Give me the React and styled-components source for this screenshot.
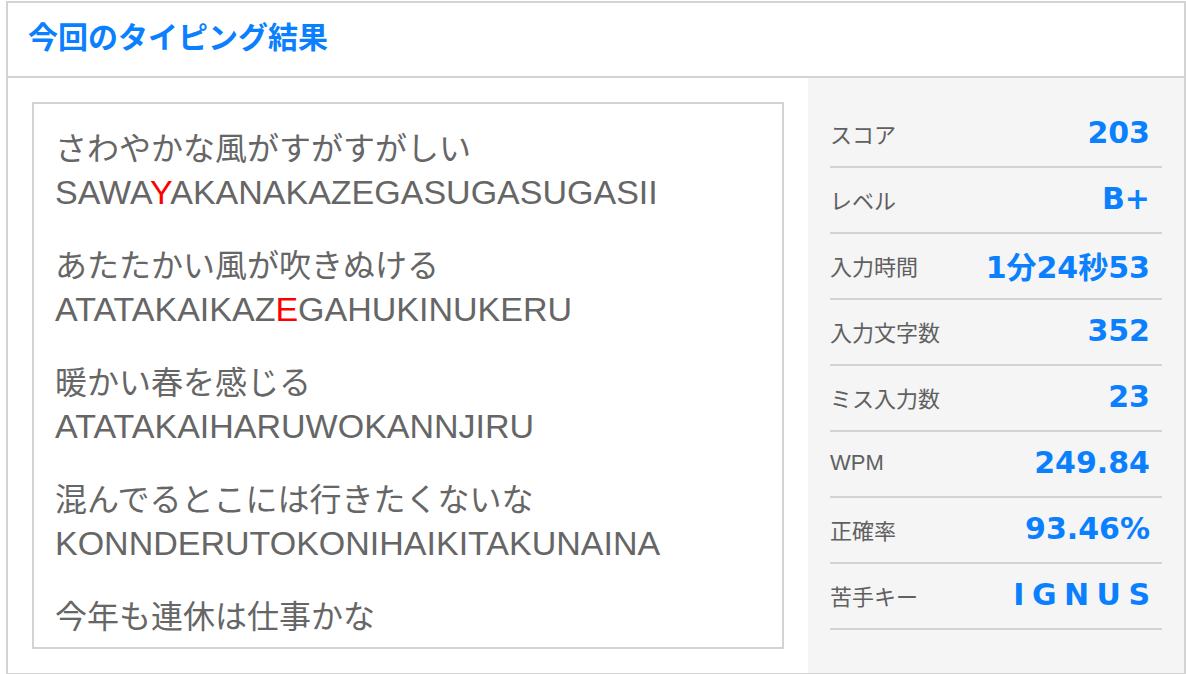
import * as React from 'react';
import styled, { createGlobalStyle } from 'styled-components';

const sentences = [
  { kana: 'さわやかな風がすがすがしい', roman: 'SAWAYAKANAKAZEGASUGASUGASII', miss: 4 },
  { kana: 'あたたかい風が吹きぬける', roman: 'ATATAKAIKAZEGAHUKINUKERU', miss: 11 },
  { kana: '暖かい春を感じる', roman: 'ATATAKAIHARUWOKANNJIRU' },
  { kana: '混んでるとこには行きたくないな', roman: 'KONNDERUTOKONIHAIKITAKUNAINA' },
  // the last one scrolls below the box, only the kana line shows
  { kana: '今年も連休は仕事かな' },
];

const stats = [
  { label: 'スコア', value: '203' },
  { label: 'レベル', value: 'B+' },
  { label: '入力時間', value: '1分24秒53' },
  { label: '入力文字数', value: '352' },
  { label: 'ミス入力数', value: '23' },
  { label: 'WPM', value: '249.84' },
  { label: '正確率', value: '93.46%' },
  { label: '苦手キー', value: 'I G N U S' },
];

const RomanText = ({ text, miss }) => {
  if (miss === undefined) return text;
  return (
    <>
      {text.slice(0, miss)}
      <MissChar>{text[miss]}</MissChar>
      {text.slice(miss + 1)}
    </>
  );
};

const App = () => {
  return (
    <>
      <GlobalStyle />
      <ResultFrame>
        <Header>
          <Title>今回のタイピング結果</Title>
        </Header>
        <Body>
          <LeftPane>
            <SentenceBox>
              {sentences.map((s) => (
                <SentencePair key={s.kana}>
                  <KanaLine>{s.kana}</KanaLine>
                  {s.roman && (
                    <RomanLine>
                      <RomanText text={s.roman} miss={s.miss} />
                    </RomanLine>
                  )}
                </SentencePair>
              ))}
            </SentenceBox>
          </LeftPane>
          <StatsPane>
            {stats.map((stat) => (
              <StatRow key={stat.label}>
                <StatLabel>{stat.label}</StatLabel>
                <StatValue>{stat.value}</StatValue>
              </StatRow>
            ))}
          </StatsPane>
        </Body>
      </ResultFrame>
    </>
  );
};

const GlobalStyle = createGlobalStyle`
  body {
    margin: 0;
    background: #fff;
    font-family: "Liberation Sans", "Noto Sans CJK JP", sans-serif;
  }
`;

const ResultFrame = styled.div`
  box-sizing: border-box;
  width: 1180px;
  margin: 1px 0 0 6px;
  border: 2px solid #d3d3d3;
  background: #fff;
`;

const Header = styled.div`
  display: flex;
  align-items: center;
  height: 75px;
  box-sizing: border-box;
  padding: 0 0 9px 20px;
  border-bottom: 2px solid #d3d3d3;
`;

const Title = styled.h2`
  margin: 0;
  font-family: "Noto Sans CJK JP", sans-serif;
  font-size: 30px;
  font-weight: 700;
  line-height: 1;
  color: #0a80fe;
`;

const Body = styled.div`
  display: grid;
  grid-template-columns: 800px 1fr;
`;

const LeftPane = styled.div`
  padding: 24px;
`;

const SentenceBox = styled.div`
  box-sizing: border-box;
  height: 547px;
  padding: 19px 21px 0;
  border: 2px solid #d3d3d3;
  overflow: hidden;
  color: #666;
`;

const SentencePair = styled.div`
  margin-bottom: 25px;
`;

const KanaLine = styled.div`
  font-family: "Noto Sans CJK JP", sans-serif;
  font-size: 32px;
  line-height: 46px;
  white-space: nowrap;
`;

const RomanLine = styled.div`
  font-family: "Liberation Sans", sans-serif;
  font-size: 34px;
  line-height: 46px;
  white-space: nowrap;
`;

const MissChar = styled.span`
  color: #ff0000;
`;

const StatsPane = styled.div`
  background: #f5f5f5;
  padding: 24px 22px;
`;

const StatRow = styled.div`
  display: flex;
  justify-content: space-between;
  align-items: center;
  box-sizing: border-box;
  height: 66px;
  padding: 0 12px 3px 0;
  border-bottom: 2px solid #d3d3d3;
`;

const StatLabel = styled.span`
  font-family: "Liberation Sans", "Noto Sans CJK JP", sans-serif;
  font-size: 22px;
  color: #606060;
`;

const StatValue = styled.span`
  font-family: "DejaVu Sans", "Noto Sans CJK JP", sans-serif;
  font-size: 30px;
  font-weight: 700;
  word-spacing: -3px;
  color: #0a80fe;
  white-space: pre;
`;

export default App;
